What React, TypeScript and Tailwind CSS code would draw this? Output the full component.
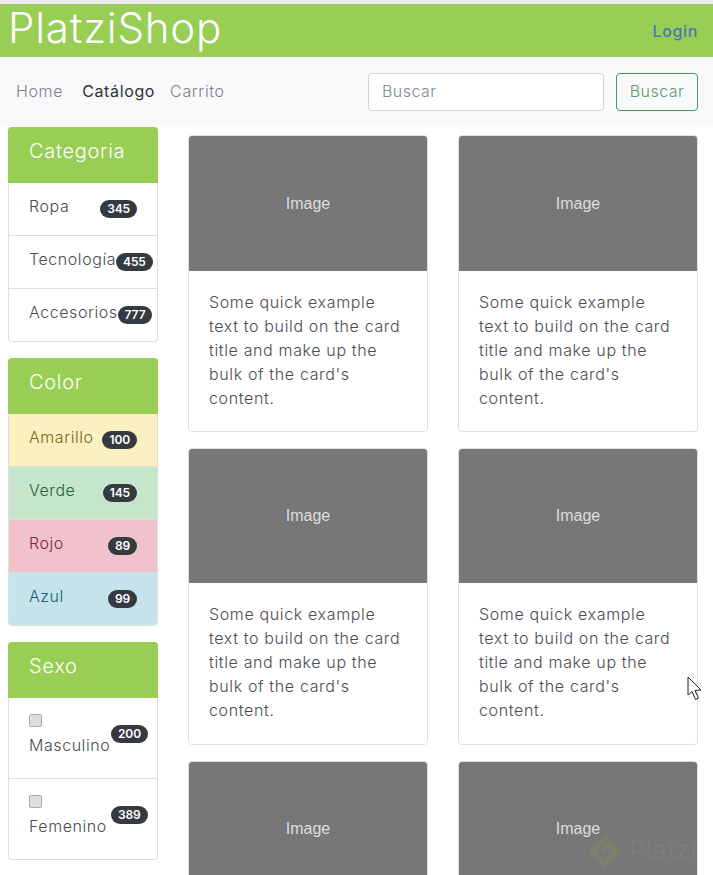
import * as React from "react";
import clsx from "clsx";

const FONT = "font-['Inter','Liberation_Sans',sans-serif]";

type Row = {
  label: string;
  count: number;
  className?: string;
};

const categories: Row[] = [
  { label: "Ropa", count: 345 },
  { label: "Tecnología", count: 455 },
  { label: "Accesorios", count: 777 },
];

const colors: Row[] = [
  { label: "Amarillo", count: 100, className: "bg-[#fbf0c0] text-[#7d6418]" },
  { label: "Verde", count: 145, className: "bg-[#c5e6cb] text-[#24633a]" },
  { label: "Rojo", count: 89, className: "bg-[#f2c2cc] text-[#7a2438]" },
  { label: "Azul", count: 99, className: "bg-[#c4e3ea] text-[#1c5a68]" },
];

const sexes: Row[] = [
  { label: "Masculino", count: 200 },
  { label: "Femenino", count: 389 },
];

const Badge = ({ count, className }: { count: number; className?: string }) => (
  <span
    className={clsx(
      "shrink-0 h-[18px] px-[7px] rounded-full bg-[#343a40] text-white",
      "text-[12px] font-semibold leading-[18px] tracking-[-0.01em]",
      className
    )}
  >
    {count}
  </span>
);

const ListCard = ({ title, children }: { title: string; children: React.ReactNode }) => (
  <div className="w-[150px] rounded-[4px] border border-[#dfdfdf] border-t-0 bg-white">
    <div className="-mx-px h-14 rounded-t-[4px] bg-[#97ce53] pl-[21px] pt-[11px] text-[20px] leading-[26px] font-light tracking-[0.035em] text-white">
      {title}
    </div>
    {children}
  </div>
);

const ListRow = ({ row, first, last }: { row: Row; first?: boolean; last?: boolean }) => (
  <div
    className={clsx(
      "flex justify-between px-5 pt-[11px] text-[16px] font-light leading-6 tracking-[0.035em]",
      first ? "h-[52px]" : "h-[53px] border-t border-[#dfdfdf]",
      last && row.className && "rounded-b-[4px]",
      row.className ?? "text-[#4b4b52]"
    )}
  >
    <span>{row.label}</span>
    <Badge count={row.count} className="mt-[6px]" />
  </div>
);

const SexRow = ({ row, first }: { row: Row; first?: boolean }) => (
  <div
    className={clsx(
      "flex pl-5 pt-3 text-[16px] font-light leading-6 tracking-[0.035em] text-[#4b4b52]",
      first ? "h-20" : "h-[81px] border-t border-[#dfdfdf]"
    )}
  >
    <div className="flex min-w-[82px] flex-col">
      <span className="h-[23px] pt-[4px]">
        <span className="block h-[13px] w-[13px] rounded-[2px] border border-[#ababab] bg-[#dedede]" />
      </span>
      <span>{row.label}</span>
    </div>
    <Badge count={row.count} className="mt-[15px]" />
  </div>
);

const ProductCard = ({ imageOnly, short }: { imageOnly?: boolean; short?: boolean }) => (
  <div className="w-[240px] h-[297px] shrink-0 rounded-[4px] border border-[#dfdfdf] bg-white overflow-hidden">
    <div
      className={clsx(
        "flex items-center justify-center bg-[#777777] font-['Liberation_Sans',sans-serif] text-[16px] text-[#dddddd]",
        short ? "h-[134px]" : "h-[135px]"
      )}
    >
      Image
    </div>
    {!imageOnly && (
      <p className="px-5 pt-[19px] text-[16px] font-light leading-6 tracking-[0.04em] text-[#4b4b52]">
        Some quick example text to build on the card title and make up the bulk of the card's content.
      </p>
    )}
  </div>
);

const Watermark = () => (
  <div className="absolute left-[586px] top-[830px] flex items-center gap-[7px] opacity-15">
    <svg width="36" height="38" viewBox="0 0 36 38" fill="none">
      <path d="M22 5 L6 20 L18 33 L31 20 L24 13 L17 20" stroke="#9bb84a" strokeWidth="6" />
    </svg>
    <span className="text-[26px] font-medium text-[#9a9a9a]">Platzi</span>
  </div>
);

const Cursor = () => (
  <svg className="absolute left-[687px] top-[676px]" width="16" height="25" viewBox="0 0 16 25" fill="white">
    <path d="M1 1 L1 19 L5 15.5 L8.5 23.5 L11.5 22 L8 14.5 L14 14 Z" stroke="#222222" strokeWidth="1" />
  </svg>
);

const App: React.FC = () => {
  return (
    <div className={clsx("relative h-[875px] overflow-hidden bg-white", FONT)}>
      <div className="h-1 bg-[#ececec]" />

      <header className="flex h-[53px] items-start justify-between border-t border-[#aebf8c] bg-[#97ce53] pl-2 pr-[15px]">
        <span className="text-[42px] font-light leading-[46px] tracking-[0.02em] text-white">PlatziShop</span>
        <a className="mt-[14px] text-[16px] font-medium leading-6 tracking-[0.04em] text-[#4a79b5]">Login</a>
      </header>

      <nav className="flex h-[70px] items-center bg-[#f8f9fa] pl-4 pr-[15px] text-[16px] font-light tracking-[0.04em]">
        <a className="mb-[2px] mr-[19px] text-[#808085]">Home</a>
        <a className="mb-[2px] mr-[15px] font-normal text-[#303036]">Catálogo</a>
        <a className="mb-[2px] text-[#808085]">Carrito</a>
        <input
          placeholder="Buscar"
          className="ml-auto h-[38px] w-[236px] rounded-[4px] border border-[#ced4da] bg-white px-[13px] pb-[2px] font-light tracking-[0.03em] placeholder:text-[#808a90]"
        />
        <button className="ml-3 h-[38px] w-[82px] rounded-[4px] border border-[#4b9a5c] pb-[2px] tracking-[0.03em] text-[#5f9a68]">
          Buscar
        </button>
      </nav>

      <div className="flex">
        <aside className="ml-2 flex w-[150px] shrink-0 flex-col gap-4">
          <ListCard title="Categoria">
            {categories.map((row, i) => (
              <ListRow key={row.label} row={row} first={i === 0} />
            ))}
          </ListCard>
          <ListCard title="Color">
            {colors.map((row, i) => (
              <ListRow key={row.label} row={row} first={i === 0} last={i === colors.length - 1} />
            ))}
          </ListCard>
          <ListCard title="Sexo">
            {sexes.map((row, i) => (
              <SexRow key={row.label} row={row} first={i === 0} />
            ))}
          </ListCard>
        </aside>

        <main className="ml-[30px] grid grid-cols-[240px_240px] gap-x-[30px] gap-y-4 pt-2">
          {Array.from({ length: 6 }).map((_, i) => (
            <ProductCard key={i} short={i >= 2} imageOnly={i >= 4} />
          ))}
        </main>
      </div>

      <Cursor />
      <Watermark />
    </div>
  );
};

export default App;
